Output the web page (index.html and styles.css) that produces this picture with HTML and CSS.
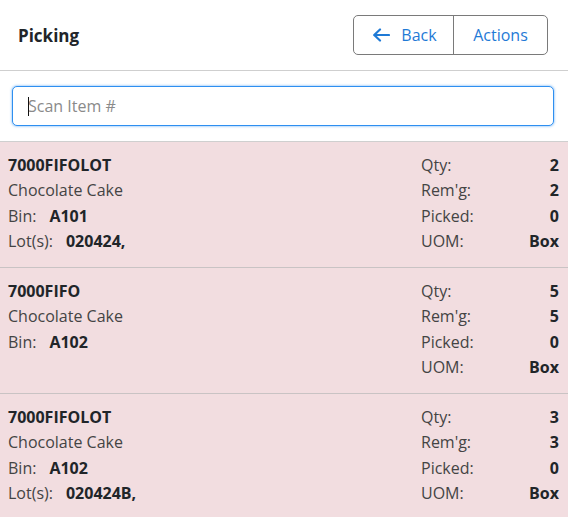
FILE: index.html
```html
<!DOCTYPE html>
<html lang="en">
<head>
<meta charset="utf-8">
<title>Picking</title>
<link rel="stylesheet" href="styles.css">
</head>
<body>
<header class="topbar">
  <h1 class="title">Picking</h1>
  <div class="btn-group">
    <button class="btn btn-back" type="button">
      <svg class="arrow" width="18" height="14" viewBox="0 0 18 14" aria-hidden="true">
        <path d="M17 7H2.5M8 1.5L2.2 7L8 12.5" fill="none" stroke="currentColor" stroke-width="2.2" stroke-linecap="round" stroke-linejoin="round"/>
      </svg>
      <span>Back</span>
    </button>
    <button class="btn btn-actions" type="button">Actions</button>
  </div>
</header>
<div class="search">
  <div class="scan-wrap">
    <input class="scan" type="text" placeholder="Scan Item #" autofocus>
    <span class="caret"></span>
  </div>
</div>
<div class="list">
  <div class="item">
    <div class="left">
      <div class="row sku">7000FIFOLOT</div>
      <div class="row desc">Chocolate Cake</div>
      <div class="row"><span class="lbl">Bin:</span><b class="val">A101</b></div>
      <div class="row"><span class="lbl">Lot(s):</span><b class="val">020424,</b></div>
    </div>
    <div class="right">
      <div class="row kv"><span class="lbl">Qty:</span><b>2</b></div>
      <div class="row kv"><span class="lbl">Rem'g:</span><b>2</b></div>
      <div class="row kv"><span class="lbl">Picked:</span><b>0</b></div>
      <div class="row kv"><span class="lbl">UOM:</span><b>Box</b></div>
    </div>
  </div>
  <div class="item">
    <div class="left">
      <div class="row sku">7000FIFO</div>
      <div class="row desc">Chocolate Cake</div>
      <div class="row"><span class="lbl">Bin:</span><b class="val">A102</b></div>
    </div>
    <div class="right">
      <div class="row kv"><span class="lbl">Qty:</span><b>5</b></div>
      <div class="row kv"><span class="lbl">Rem'g:</span><b>5</b></div>
      <div class="row kv"><span class="lbl">Picked:</span><b>0</b></div>
      <div class="row kv"><span class="lbl">UOM:</span><b>Box</b></div>
    </div>
  </div>
  <div class="item">
    <div class="left">
      <div class="row sku">7000FIFOLOT</div>
      <div class="row desc">Chocolate Cake</div>
      <div class="row"><span class="lbl">Bin:</span><b class="val">A102</b></div>
      <div class="row"><span class="lbl">Lot(s):</span><b class="val">020424B,</b></div>
    </div>
    <div class="right">
      <div class="row kv"><span class="lbl">Qty:</span><b>3</b></div>
      <div class="row kv"><span class="lbl">Rem'g:</span><b>3</b></div>
      <div class="row kv"><span class="lbl">Picked:</span><b>0</b></div>
      <div class="row kv"><span class="lbl">UOM:</span><b>Box</b></div>
    </div>
  </div>
</div>
</body>
</html>
```

FILE: styles.css
```css
html, body {
  margin: 0;
  padding: 0;
  overflow: hidden;
  background: #ffffff;
}
body {
  font-family: "Open Sans", "Noto Sans", sans-serif;
  font-size: 16px;
  color: #212529;
}
.topbar {
  height: 70px;
  border-bottom: 1px solid #cfcfcf;
  display: flex;
  align-items: center;
  justify-content: space-between;
  padding: 0 20px 0 18px;
  box-sizing: content-box;
}
.title {
  margin: 0;
  font-size: 17px;
  font-weight: 700;
  color: #212529;
  padding-top: 1px;
}
.btn-group {
  display: flex;
  border: 1px solid #7a7a7a;
  border-radius: 5px;
  height: 38px;
}
.btn {
  font-family: inherit;
  font-size: 16px;
  color: #1f7ad6;
  background: transparent;
  border: 0;
  padding: 0;
  display: flex;
  align-items: center;
  justify-content: center;
  gap: 11px;
  cursor: pointer;
}
.btn-back {
  width: 100px;
  padding-left: 2px;
  border-right: 1px solid #7a7a7a;
}
.btn-actions {
  width: 93px;
}
.arrow {
  display: block;
}
.search {
  padding: 15px 14px 15px 12px;
}
.scan-wrap {
  position: relative;
}
.scan {
  display: block;
  width: 100%;
  box-sizing: border-box;
  height: 40px;
  border: 1.5px solid #2e8ff0;
  border-radius: 5px;
  box-shadow: 0 0 2px 1px rgba(46, 143, 240, 0.35);
  padding: 0 15px;
  font-family: inherit;
  font-size: 16px;
  color: #212529;
  outline: none;
  caret-color: transparent;
}
.scan::placeholder {
  color: #8a8a8a;
}
.caret {
  position: absolute;
  left: 16px;
  top: 11px;
  width: 1px;
  height: 19px;
  background: #111111;
}
.list {
  border-top: 1px solid #cfcfcf;
}
.item {
  display: flex;
  justify-content: space-between;
  background: #f2dde0;
  border-bottom: 1px solid #c9c3c4;
  height: 126px;
  padding: 10.5px 9px 0 8px;
  box-sizing: border-box;
}
.item:last-child {
  height: 130px;
}
.row {
  line-height: 25.5px;
  height: 25.5px;
  white-space: nowrap;
}
.sku {
  font-weight: 700;
}
.desc, .lbl {
  color: #444444;
}
.val {
  margin-left: 13px;
  font-weight: 700;
}
.right {
  width: 138px;
}
.kv {
  display: flex;
  justify-content: space-between;
}
.kv b {
  font-weight: 700;
}
```
